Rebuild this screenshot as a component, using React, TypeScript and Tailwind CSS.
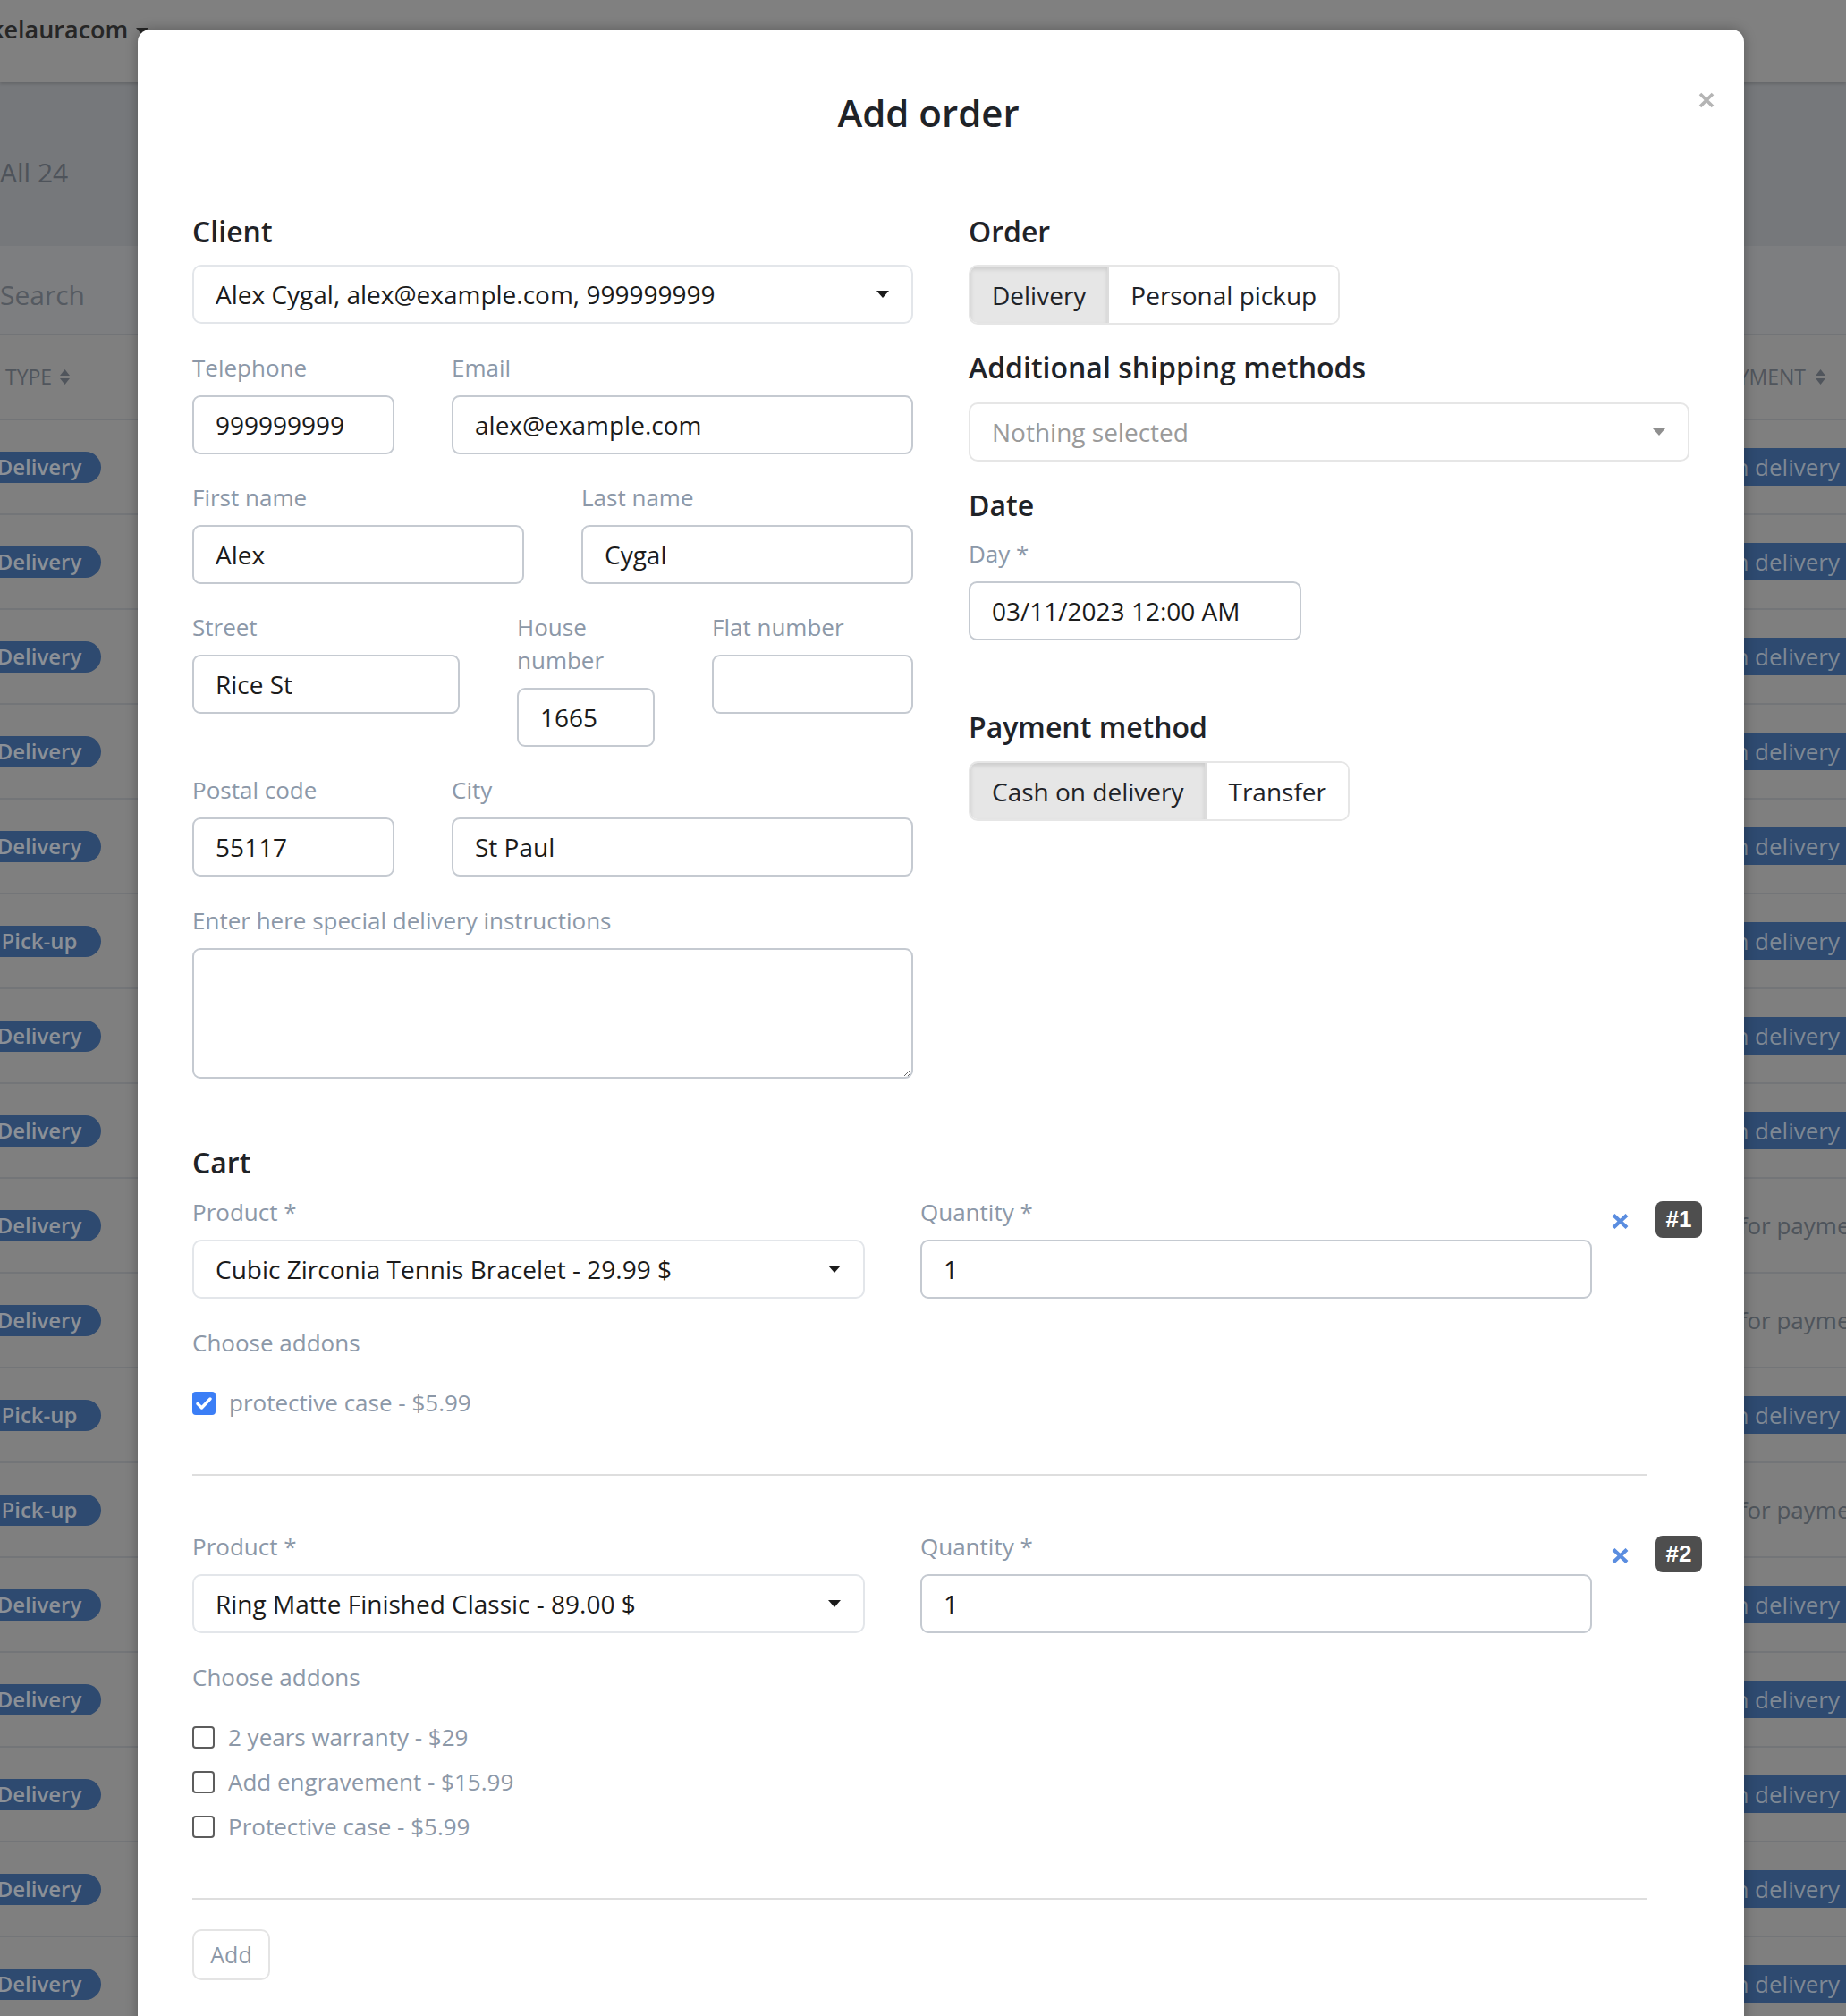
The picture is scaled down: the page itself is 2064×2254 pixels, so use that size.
import React from "react";

type Row = { left: string; right: "cash" | "wait" };

const ROWS: Row[] = [
  { left: "Delivery", right: "cash" },
  { left: "Delivery", right: "cash" },
  { left: "Delivery", right: "cash" },
  { left: "Delivery", right: "cash" },
  { left: "Delivery", right: "cash" },
  { left: "Pick-up", right: "cash" },
  { left: "Delivery", right: "cash" },
  { left: "Delivery", right: "cash" },
  { left: "Delivery", right: "wait" },
  { left: "Delivery", right: "wait" },
  { left: "Pick-up", right: "cash" },
  { left: "Pick-up", right: "wait" },
  { left: "Delivery", right: "cash" },
  { left: "Delivery", right: "cash" },
  { left: "Delivery", right: "cash" },
  { left: "Delivery", right: "cash" },
  { left: "Delivery", right: "cash" },
];

function SortIcon({ color }: { color: string }) {
  return (
    <svg width="13" height="19" viewBox="0 0 13 19">
      <path d="M6.5 1 12 8H1z" fill={color} />
      <path d="M6.5 18 1 11h11z" fill={color} />
    </svg>
  );
}

function Caret({ color }: { color: string }) {
  return (
    <svg width="14" height="8" viewBox="0 0 14 8">
      <path d="M0 0h14L7 8z" fill={color} />
    </svg>
  );
}

function Heading({ children, className = "" }: { children: React.ReactNode; className?: string }) {
  return (
    <div className={"text-[32px] leading-[37px] font-semibold text-[#1f2328] " + className}>{children}</div>
  );
}

function Label({ children }: { children: React.ReactNode }) {
  return <div className="text-[26px] leading-[37px] text-[#8c98a8] mb-[12px]">{children}</div>;
}

function TextInput({ value }: { value: string }) {
  return (
    <div className="h-[66px] border-2 border-[#c5cad1] rounded-[9px] bg-white pl-[24px] flex items-center text-[28px] text-[#1b1b1b]">
      {value}
    </div>
  );
}

function SelectBox({ value, placeholder }: { value: string; placeholder?: boolean }) {
  return (
    <div
      className={
        "h-[66px] border-2 rounded-[10px] bg-white pl-[24px] pr-[25px] flex items-center justify-between text-[28px] " +
        (placeholder ? "border-[#e6e6e6] text-[#9a9a9a]" : "border-[#e3e6ea] text-[#1b1b1b]")
      }
    >
      <span>{value}</span>
      <Caret color={placeholder ? "#8f8f8f" : "#1b1b1b"} />
    </div>
  );
}

function Toggle({ options }: { options: string[] }) {
  return (
    <div className="inline-flex h-[67px] border-2 border-[#e6e6e6] rounded-[10px] overflow-hidden">
      {options.map((o, i) => (
        <div
          key={o}
          className={
            "flex items-center px-[24px] text-[28px] text-[#1f2328] " +
            (i === 0 ? "bg-[#e6e6e6] shadow-[inset_0_3px_5px_rgba(0,0,0,0.12)] border-r-2 border-[#dcdcdc]" : "bg-white")
          }
        >
          {o}
        </div>
      ))}
    </div>
  );
}

function Field({ label, value, className = "" }: { label: React.ReactNode; value: string; className?: string }) {
  return (
    <div className={className}>
      <Label>{label}</Label>
      <TextInput value={value} />
    </div>
  );
}

function Check({ checked, label }: { checked?: boolean; label: string }) {
  return (
    <div className="flex items-center h-[37px] gap-[15px]">
      {checked ? (
        <div className="w-[26px] h-[26px] rounded-[4px] bg-[#3b7ef6] flex items-center justify-center">
          <svg width="18" height="14" viewBox="0 0 18 14">
            <path d="M2 7.5 6.5 12 16 2" stroke="white" strokeWidth="3.4" fill="none" strokeLinecap="round" strokeLinejoin="round" />
          </svg>
        </div>
      ) : (
        <div className="w-[25px] h-[25px] rounded-[4px] border-2 border-[#5c5c5c] bg-white" />
      )}
      <span className="text-[26px] text-[#8c98a8]">{label}</span>
    </div>
  );
}

function RemoveX() {
  return (
    <svg width="21" height="17" viewBox="0 0 21 17" className="ml-[21px] mt-[20px] shrink-0">
      <path d="M3 1.5 18 15.5M18 1.5 3 15.5" stroke="#5a8de0" strokeWidth="4.2" />
    </svg>
  );
}

function CartItem({
  n,
  product,
  addons,
}: {
  n: number;
  product: string;
  addons: { label: string; checked?: boolean }[];
}) {
  return (
    <div>
      <div className="flex items-start">
        <div className="w-[752px] shrink-0">
          <Label>Product *</Label>
          <SelectBox value={product} />
        </div>
        <div className="w-[751px] ml-[62px] shrink-0">
          <Label>Quantity *</Label>
          <TextInput value="1" />
        </div>
        <RemoveX />
        <div className="ml-[29px] mt-[6px] w-[52px] h-[41px] rounded-[8px] bg-[#4e4e4e] text-white font-['Liberation_Sans',sans-serif] font-bold text-[26px] flex items-center justify-center shrink-0">
          #{n}
        </div>
      </div>
      <div className="mt-[31px] text-[26px] leading-[37px] text-[#8c98a8]">Choose addons</div>
      <div className="mt-[30px] flex flex-col gap-[13px]">
        {addons.map((a) => (
          <Check key={a.label} label={a.label} checked={a.checked} />
        ))}
      </div>
      <div className="mt-[61px] h-[2px] w-[1626px] bg-[#dedede]" />
    </div>
  );
}

export default function App() {
  return (
    <div className="relative w-[2064px] h-[2254px] overflow-hidden bg-[#7f7f7f] font-['Open_Sans',sans-serif]">
      {/* background page (dimmed by the modal backdrop) */}
      <div className="relative z-10 h-[92px] bg-[#808080] shadow-[0_2px_3px_rgba(0,0,0,0.15)] flex items-start pt-[14px]">
        <span className="-ml-[11px] text-[27px] leading-[37px] font-semibold text-[#262626]">kelauracom</span>
        <svg width="14" height="8" viewBox="0 0 14 8" className="ml-[9px] mt-[17px]">
          <path d="M0 0h14L7 8z" fill="#262626" />
        </svg>
      </div>
      <div className="h-[183px] bg-[#76787b] pt-[81px]">
        <div className="text-[30px] leading-[40px] text-[#4e535a]">All 24</div>
      </div>
      <div className="h-[100px] bg-[#7d7e80] pt-[35px] border-b-2 border-[#727477]">
        <div className="text-[30px] leading-[40px] text-[#555a61]">Search</div>
      </div>
      <div className="h-[95px] flex items-center justify-between border-b-2 border-[#727477]">
        <div className="flex items-center gap-[8px] pl-[6px]">
          <span className="text-[23px] text-[#50555c]">TYPE</span>
          <SortIcon color="#50555c" />
        </div>
        <div className="flex items-center gap-[10px] pr-[22px]">
          <span className="text-[23px] text-[#50555c]">PAYMENT</span>
          <SortIcon color="#50555c" />
        </div>
      </div>
      {ROWS.map((r, i) => (
        <div key={i} className="h-[106px] flex items-center justify-between border-b-2 border-[#737578]">
          <div className="-ml-[25px] w-[138px] h-[35px] rounded-full bg-[#2e4a70] flex items-center justify-center text-[24px] font-semibold text-[#8b9097]">
            {r.left}
          </div>
          {r.right === "cash" ? (
            <div className="-mr-[20px] h-[42px] pl-[16px] pr-[27px] bg-[#2e4a70] flex items-center text-[26px] text-[#7e8894]">
              Cash on delivery
            </div>
          ) : (
            <div className="w-[260px] pl-[43px] text-[26px] text-[#4e545b] whitespace-nowrap">Waiting for payment</div>
          )}
        </div>
      ))}

      {/* modal */}
      <div className="absolute left-[154px] top-[33px] z-20 w-[1796px] bg-white rounded-t-[14px] shadow-[0_0_14px_rgba(0,0,0,0.3)] pb-[120px]">
        <div className="flex items-start pl-[61px] pr-[33px] pt-[64px]">
          <h2 className="flex-1 text-center text-[42px] leading-[57px] font-semibold text-[#1f2328]">Add order</h2>
          <div className="w-[56px] flex justify-end mt-[6px]">
            <svg width="18" height="18" viewBox="0 0 18 18">
              <path d="M2 2 16 16M16 2 2 16" stroke="#b4b4b4" strokeWidth="3.6" />
            </svg>
          </div>
        </div>

        <div className="mt-[86px] px-[61px] grid grid-cols-2 gap-x-[62px]">
          {/* left column */}
          <div>
            <Heading className="mb-[19px]">Client</Heading>
            <SelectBox value="Alex Cygal, alex@example.com, 999999999" />
            <div className="mt-[31px] flex gap-[64px]">
              <Field className="w-[226px]" label="Telephone" value="999999999" />
              <Field className="flex-1" label="Email" value="alex@example.com" />
            </div>
            <div className="mt-[30px] flex gap-[64px]">
              <Field className="w-[371px]" label="First name" value="Alex" />
              <Field className="flex-1" label="Last name" value="Cygal" />
            </div>
            <div className="mt-[30px] flex gap-[64px] items-start">
              <Field className="w-[299px]" label="Street" value="Rice St" />
              <Field
                className="w-[154px]"
                label={
                  <>
                    House
                    <br />
                    number
                  </>
                }
                value="1665"
              />
              <Field className="flex-1" label="Flat number" value="" />
            </div>
            <div className="mt-[30px] flex gap-[64px]">
              <Field className="w-[226px]" label="Postal code" value="55117" />
              <Field className="flex-1" label="City" value="St Paul" />
            </div>
            <div className="mt-[31px]">
              <Label>Enter here special delivery instructions</Label>
              <textarea
                readOnly
                className="block w-full h-[146px] border-2 border-[#c5cad1] rounded-[9px] bg-white outline-none"
              />
            </div>
          </div>

          {/* right column */}
          <div>
            <Heading className="mb-[19px]">Order</Heading>
            <Toggle options={["Delivery", "Personal pickup"]} />
            <Heading className="mt-[29px] mb-[21px]">Additional shipping methods</Heading>
            <SelectBox value="Nothing selected" placeholder />
            <Heading className="mt-[30px] mb-[18px]">Date</Heading>
            <Label>Day *</Label>
            <div className="w-[372px]">
              <TextInput value="03/11/2023 12:00 AM" />
            </div>
            <Heading className="mt-[78px] mb-[20px]">Payment method</Heading>
            <Toggle options={["Cash on delivery", "Transfer"]} />
          </div>
        </div>

        <div className="mt-[75px] px-[61px]">
          <Heading className="mb-[19px]">Cart</Heading>
          <CartItem n={1} product="Cubic Zirconia Tennis Bracelet - 29.99 $" addons={[{ label: "protective case - $5.99", checked: true }]} />
          <div className="mt-[61px]">
            <CartItem
              n={2}
              product="Ring Matte Finished Classic - 89.00 $"
              addons={[
                { label: "2 years warranty - $29" },
                { label: "Add engravement - $15.99" },
                { label: "Protective case - $5.99" },
              ]}
            />
          </div>
          <div className="mt-[33px] w-[87px] h-[57px] border-2 border-[#e4e4e4] rounded-[10px] flex items-center justify-center text-[25px] text-[#8c98a8]">
            Add
          </div>
        </div>
      </div>
    </div>
  );
}
